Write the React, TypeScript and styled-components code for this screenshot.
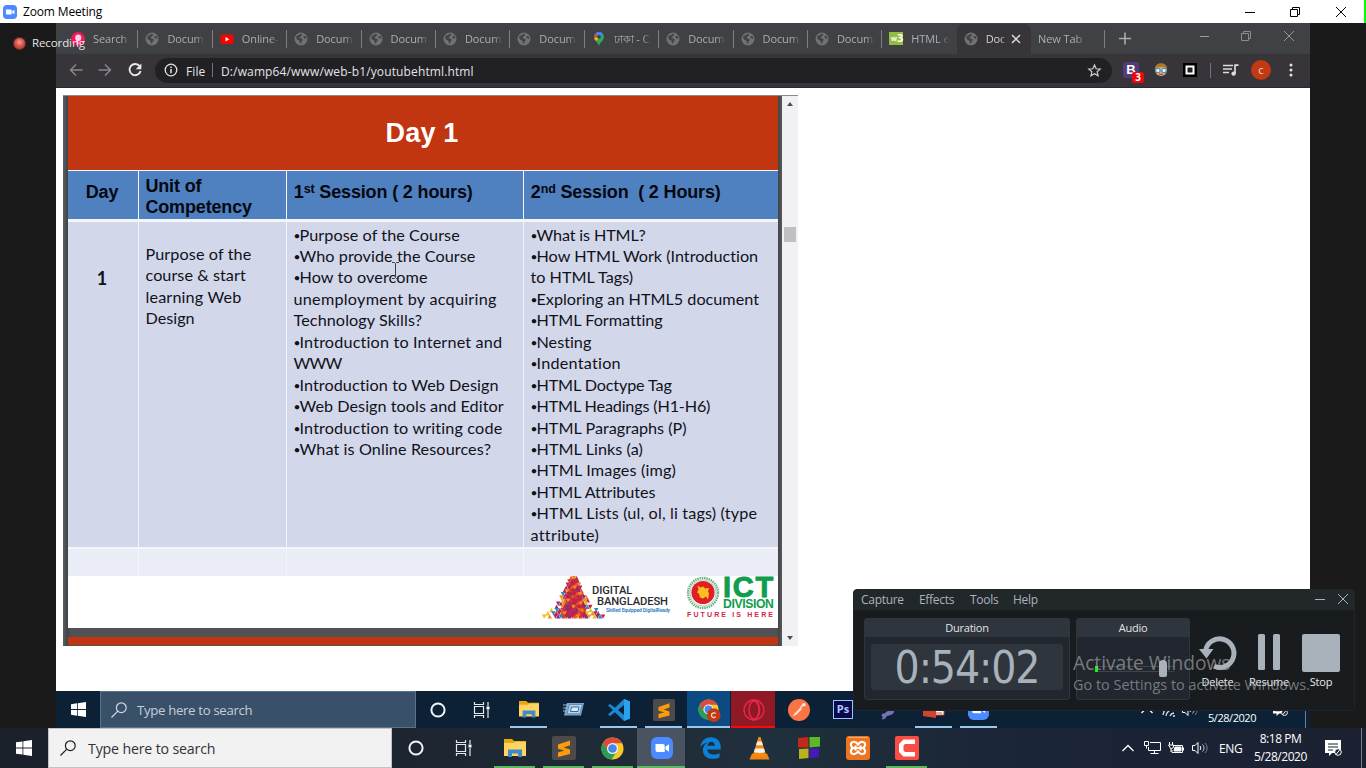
import React from "react";
import styled, { createGlobalStyle, css } from "styled-components";

const Global = createGlobalStyle`
  * { box-sizing: border-box; }
  html, body { margin: 0; padding: 0; background: #1a1a1a; }
  body { width: 1366px; height: 768px; overflow: hidden; font-family: "Open Sans", "Noto Sans", sans-serif; }
  svg { display: block; flex: none; overflow: visible; }
`;

/* ---------- desktop shell ---------- */
const Desktop = styled.div`
  position: relative;
  width: 1366px;
  height: 768px;
  display: flex;
  flex-direction: column;
  overflow: hidden;
  background: #1a1a1a;
`;
const TitleBar = styled.header`
  height: 23px;
  flex: none;
  display: flex;
  align-items: center;
  padding-left: 3px;
  background: #fff;
  border-right: 2px solid #00ff00;
`;
const TitleText = styled.span`
  margin-left: 6px;
  flex: 1;
  font-size: 12px;
  line-height: 22px;
  letter-spacing: -0.15px;
  color: #000;
`;
const Caption = styled.div<{ $w: number }>`
  width: ${(p) => p.$w}px;
  flex: none;
  display: flex;
  justify-content: center;
`;
const Stage = styled.main`
  height: 705px;
  flex: none;
  padding: 0 56px;
`;
const SharedScreen = styled.section`
  width: 1254px;
  height: 705px;
  display: flex;
  flex-direction: column;
  background: #fff;
`;
const Recording = styled.div`
  position: absolute;
  left: 13px;
  top: 35px;
  display: flex;
  align-items: center;
  gap: 6px;
  color: #e6e6e6;
  font-size: 11.5px;
  line-height: 16px;
  letter-spacing: -0.1px;
`;
const RecDot = styled.i`
  width: 13px;
  height: 13px;
  border-radius: 50%;
  border: 1px solid #6d2f2b;
  background: radial-gradient(circle at 50% 38%, #f3a59b 0, #dc5a4f 40%, #b93f36 75%);
`;

/* ---------- browser ---------- */
const TabStrip = styled.div`
  height: 31px;
  flex: none;
  display: flex;
  padding-left: 8px;
  background: #3f4145;
`;
const Tab = styled.div<{ $active?: boolean; $noLine?: boolean }>`
  position: relative;
  width: 74.4px;
  height: 31px;
  flex: none;
  display: flex;
  align-items: center;
  padding: 0 0 0 7px;
  color: #acaeb2;
  font-size: 11px;
  ${(p) =>
    !p.$active && !p.$noLine &&
    css`
      &::after {
        content: "";
        position: absolute;
        right: 0;
        top: 7px;
        width: 1px;
        height: 18px;
        background: #7d7f83;
      }
    `}
  ${(p) =>
    p.$active &&
    css`
      margin-top: 1px;
      height: 30px;
      padding-bottom: 1px;
      border-radius: 7px 7px 0 0;
      background: #37343a;
      color: #d2d1d4;
    `}
`;
const TabText = styled.span<{ $w?: number; $ml?: number }>`
  margin-left: ${(p) => p.$ml ?? 8}px;
  margin-right: 6px;
  flex: none;
  width: ${(p) => p.$w ?? 38}px;
  overflow: hidden;
  white-space: nowrap;
  line-height: 16px;
  letter-spacing: -0.1px;
  mask-image: linear-gradient(90deg, #000 75%, transparent 100%);
`;
const StripControls = styled.div`
  flex: 1;
  display: flex;
  justify-content: flex-end;
  align-items: center;
  padding: 0 0 5px 0;
`;
const Toolbar = styled.div`
  height: 34px;
  flex: none;
  display: flex;
  align-items: center;
  padding: 0 0 1px 12px;
  background: #37343a;
  border-bottom: 1px solid #2b292e;
`;
const NavIcons = styled.div`
  width: 87px;
  flex: none;
  display: flex;
  gap: 13px;
`;
const Omnibox = styled.div`
  width: 957px;
  flex: none;
  height: 25px;
  display: flex;
  align-items: center;
  padding: 0 11px 0 9px;
  border-radius: 13px;
  background: #212024;
  color: #e4e3e6;
  font-size: 12px;
  line-height: 23px;
`;
const FileLabel = styled.span`
  width: 26px;
  margin-left: 8px;
  padding-top: 2px;
  letter-spacing: 0.1px;
`;
const Url = styled.span`
  flex: 1;
  margin-left: 8px;
  padding-top: 2px;
  letter-spacing: 0.13px;
`;
const VLine = styled.i<{ $h: number; $c?: string }>`
  width: 1px;
  flex: none;
  height: ${(p) => p.$h}px;
  background: ${(p) => p.$c ?? "#76747a"};
`;
const Extensions = styled.div`
  flex: 1;
  display: flex;
  align-items: center;
  padding-left: 11px;
`;
const ExtB = styled.div`
  position: relative;
  width: 16px;
  height: 16px;
  border-radius: 3px;
  background: #523c78;
  color: #fff;
  font: bold 13px/16px "Liberation Sans", sans-serif;
  text-align: center;
`;
const ExtBadge = styled.span`
  position: absolute;
  left: 9px;
  top: 10px;
  width: 12px;
  height: 11px;
  border-radius: 2px;
  background: #f00606;
  font: bold 10px/11px "Open Sans", sans-serif;
`;
const Avatar = styled.span`
  width: 20px;
  height: 20px;
  margin-left: 12px;
  border-radius: 50%;
  background: #c13a12;
  color: #f0d8d0;
  font-size: 11px;
  line-height: 19px;
  text-align: center;
`;
const Page = styled.div`
  height: 603px;
  flex: none;
  padding: 7px 0 0 7px;
  background: #fff;
`;

/* ---------- slide deck ---------- */
const Viewer = styled.div`
  width: 735px;
  height: 551px;
  display: flex;
  border-top: 1px solid #8a8a8c;
  background: #fff;
`;
const SlideArea = styled.div`
  width: 719px;
  padding: 0 4px 0 5px;
  background: linear-gradient(90deg, #596066 0, #424649 4px, #505254 8px, #505254 714px, #424446 715px, #55585c 719px);
`;
const Slide = styled.article`
  width: 710px;
  height: 532px;
  display: flex;
  flex-direction: column;
  background: #fff;
`;
const NextSlide = styled.div`
  width: 710px;
  height: 8px;
  margin-top: 9px;
  background: #c13510;
`;
const Banner = styled.h1`
  margin: 0;
  height: 74px;
  padding-right: 2px;
  background: #c13510;
  color: #fff;
  font: bold 27px/74px "Liberation Sans", Arial, sans-serif;
  letter-spacing: 0.2px;
  text-align: center;
`;
const Table = styled.div`
  display: grid;
  grid-template-columns: 70px 147px 236px 254px;
  grid-template-rows: 48px 330px 27px;
  column-gap: 1px;
  padding-top: 1px;
  background: #f4f5fb;
`;
const HeadCell = styled.div<{ $center?: boolean }>`
  display: flex;
  flex-direction: column;
  justify-content: center;
  align-items: ${(p) => (p.$center ? "center" : "flex-start")};
  padding: ${(p) => (p.$center ? "0 2px 5px 0" : "3px 0 0 6.4px")};
  background: #4f80bf;
  color: #06080f;
  white-space: pre;
  font: bold 18px/21px "Liberation Sans", Arial, sans-serif;
  letter-spacing: -0.15px;
`;
const SessionHead = styled.div`
  padding: 0 0 8px 0.4px;
  sup {
    font-size: 12.5px;
    line-height: 0;
    vertical-align: 5px;
  }
`;
const BodyCell = styled.div<{ $top?: number; $center?: boolean }>`
  margin: 3px 0 2px;
  padding: ${(p) => p.$top ?? 1.6}px 0 0 ${(p) => (p.$center ? 0 : 6.5)}px;
  background: #d3d7ea;
  color: #10121a;
  font: 16.2px/21.43px Lato, sans-serif;
  font-variant-ligatures: none;
  white-space: pre;
  ${(p) => p.$center && css`padding-right: 2px; text-align: center; font-weight: bold; font-size: 18px;`}
`;
const FootCell = styled.div`
  background: #eaecf6;
`;
const Line = styled.div<{ $ls?: number }>`
  letter-spacing: ${(p) => p.$ls ?? 0}px;
`;
const Bullet = styled.span`
  display: inline-block;
  width: 6px;
  font-size: 12px;
  letter-spacing: 0;
  line-height: 0;
  vertical-align: 1px;
`;
const Logos = styled.footer`
  height: 52px;
  display: flex;
  padding-left: 474px;
`;
const DigitalLogo = styled.div`
  width: 144px;
  display: flex;
`;
const DigitalText = styled.div`
  margin-left: -18px;
  padding-top: 9px;
  color: #2b2b2e;
  font: 500 11.2px/11px Roboto, sans-serif;
  letter-spacing: -0.1px;
  white-space: nowrap;
`;
const DigitalSecond = styled.div`
  padding-left: 5px;
`;
const DigitalTag = styled.div`
  padding-left: 14px;
  color: #3a86c4;
  font: bold 5px/6px Roboto, sans-serif;
`;
const IctLogo = styled.div`
  width: 90px;
  display: flex;
  flex-direction: column;
`;
const IctTop = styled.div`
  height: 34px;
  display: flex;
  gap: 3px;
`;
const IctWords = styled.div`
  width: 54px;
  color: #0f9d4e;
  font: bold 12.2px/11px "Liberation Sans", Arial, sans-serif;
  letter-spacing: -0.38px;
`;
const IctBig = styled.div`
  height: 23px;
  font: bold 29px/23px "Liberation Sans", Arial, sans-serif;
  letter-spacing: 1.7px;
  -webkit-text-stroke: 0.9px #0f9d4e;
`;
const Future = styled.div`
  color: #cf2747;
  font: bold 7px/9px "Liberation Sans", Arial, sans-serif;
  letter-spacing: 2.13px;
  padding: 0 0 0 1px;
  white-space: nowrap;
`;
const ScrollTrack = styled.div`
  width: 16px;
  display: flex;
  flex-direction: column;
  align-items: center;
  justify-content: space-between;
  padding: 6px 0 6px;
  background: #f1f0f3;
`;
const Thumb = styled.div`
  width: 12px;
  height: 15px;
  margin: 0 0 273px;
  background: #c0bfc1;
`;

/* ---------- task bars ---------- */
const InnerBar = styled.div`
  height: 37px;
  flex: none;
  display: flex;
  align-items: stretch;
  background: #0c2135;
`;
const HostBar = styled.div`
  height: 40px;
  flex: none;
  display: flex;
  align-items: stretch;
  background: linear-gradient(90deg, #1b212b 0, #1d2530 30%, #20303c 56%, #1a2537 75%, #1b2131 100%);
`;
const Cell = styled.div<{ $w: number }>`
  width: ${(p) => p.$w}px;
  flex: none;
  display: flex;
  align-items: center;
  justify-content: center;
`;
const Search = styled.div<{ $host?: boolean }>`
  width: ${(p) => (p.$host ? 344 : 316)}px;
  flex: none;
  display: flex;
  align-items: center;
  gap: ${(p) => (p.$host ? 12 : 10)}px;
  padding-left: ${(p) => (p.$host ? 11 : 10)}px;
  border: 1px solid ${(p) => (p.$host ? "#c2c2c2" : "#55748c")};
  background: ${(p) => (p.$host ? "#f2f2f2" : "#385068")};
  color: ${(p) => (p.$host ? "#303438" : "#c3ced8")};
  font-size: ${(p) => (p.$host ? 14.2 : 13.2)}px;
  letter-spacing: ${(p) => (p.$host ? -0.17 : -0.32)}px;
`;
const AppSlot = styled.div<{ $w: number; $bar?: string; $inset?: number; $bg?: string }>`
  width: ${(p) => p.$w}px;
  flex: none;
  display: flex;
  align-items: center;
  justify-content: center;
  ${(p) =>
    p.$bar &&
    css`
      background-image: linear-gradient(90deg, transparent ${p.$inset ?? 4}px, ${p.$bar} ${p.$inset ?? 4}px, ${p.$bar} calc(100% - ${p.$inset ?? 4}px), transparent 0),
        linear-gradient(90deg, transparent ${p.$inset ?? 0}px, ${p.$bg ?? "transparent"} ${p.$inset ?? 0}px, ${p.$bg ?? "transparent"} calc(100% - ${p.$inset ?? 0}px), transparent 0);
      background-size: 100% 2px, 100% 100%;
      background-position: bottom, center;
      background-repeat: no-repeat;
    `}
`;
const Tray = styled.div<{ $pr: number }>`
  flex: 1;
  display: flex;
  align-items: center;
  justify-content: flex-end;
  padding-right: ${(p) => p.$pr}px;
  color: #fff;
`;
const Clock = styled.div<{ $w: number; $lh: number; $size: number }>`
  width: ${(p) => p.$w}px;
  text-align: center;
  font-size: ${(p) => p.$size}px;
  line-height: ${(p) => p.$lh}px;
  letter-spacing: -0.45px;
`;
const Lang = styled.span`
  width: 26px;
  margin-left: 7px;
  font-size: 12px;
  letter-spacing: -0.4px;
`;

/* ---------- recorder window ---------- */
const Recorder = styled.section`
  position: absolute;
  left: 853px;
  top: 589px;
  width: 502px;
  height: 122px;
  border-radius: 4px;
  border: 1px solid #1f262b;
  background: #181c1f;
  color: #aab3bb;
  overflow: hidden;
`;
const RecMenu = styled.nav`
  height: 20px;
  display: flex;
  align-items: center;
  padding: 0 0 2px 7px;
  background: #22272a;
  font-size: 12px;
  letter-spacing: -0.3px;
`;
const MenuItem = styled.span<{ $w: number }>`
  width: ${(p) => p.$w}px;
`;
const RecMenuEnd = styled.div`
  flex: 1;
  display: flex;
  justify-content: flex-end;
  align-items: center;
  gap: 13px;
  padding-right: 6px;
`;
const RecBody = styled.div`
  display: flex;
  padding: 8px 0 0 10px;
`;
const Panel = styled.div<{ $w: number }>`
  width: ${(p) => p.$w}px;
  height: 82px;
  margin-right: 6px;
  border: 1px solid #2f353d;
  border-radius: 3px;
  background: #22262e;
`;
const PanelHead = styled.div`
  height: 18px;
  background: #2f353d;
  color: #e1e4e7;
  font-size: 11px;
  line-height: 18px;
  letter-spacing: -0.25px;
  text-align: center;
`;
const Timer = styled.div`
  width: 192px;
  height: 46px;
  margin: 7px auto 0 6px;
  border-radius: 3px;
  background: #2f353d;
  color: #a9b2ba;
  font-family: "DejaVu Sans Condensed", "DejaVu Sans", sans-serif;
  font-stretch: condensed;
  font-size: 44px;
  line-height: 48px;
  letter-spacing: -1.1px;
  text-align: center;
`;
const Meter = styled.div`
  height: 17px;
  margin: 23px 15px 0 18px;
  display: flex;
  align-items: center;
`;
const MeterLevel = styled.i`
  width: 3px;
  height: 6px;
  background: #0cf80c;
`;
const MeterTrack = styled.i<{ $w: number }>`
  width: ${(p) => p.$w}px;
  height: 6px;
  border: solid #3b484b;
  border-width: 1px 0 1px 0;
`;
const Knob = styled.i`
  width: 8px;
  height: 17px;
  border-radius: 4px 4px 2px 2px;
  background: #a9b2ba;
`;
const RecButton = styled.div<{ $w: number }>`
  width: ${(p) => p.$w}px;
  height: 82px;
  flex: none;
  display: flex;
  flex-direction: column;
  justify-content: space-between;
  align-items: center;
  padding: 16px 0 9px;
  color: #e8ebee;
  font-size: 11px;
  line-height: 18px;
  letter-spacing: -0.2px;
`;
const Watermark = styled.div`
  position: absolute;
  left: 1073px;
  top: 650px;
  color: rgba(176, 178, 180, 0.62);
  white-space: nowrap;
`;
const WaterBig = styled.div`
  font-size: 19.2px;
  line-height: 25px;
  margin-bottom: -1px;
`;
const WaterSmall = styled.div`
  font-size: 14.4px;
  line-height: 21px;
  letter-spacing: 0.03px;
`;
const Cursor = styled.div`
  position: absolute;
  left: 391px;
  top: 262px;
`;

/* ---------- icons ---------- */
const ZoomIcon = ({ s }: { s: number }) => (
  <svg width={s} height={s} viewBox="0 0 22 22">
    <rect width="22" height="22" rx="6" fill="#4a8cff" />
    <path d="M4.500 7h7.200a2 2 0 0 1 2 2v6H6.500a2 2 0 0 1-2-2zM14.400 9.800 18 7.300v7.400l-3.600-2.400z" fill="#fff" />
  </svg>
);
const Minus = ({ c = "#000", w = 10 }: { c?: string; w?: number }) => (
  <svg width={w} height="10" viewBox={`0 0 ${w} 10`}><path d={`M0 5.500h${w}`} stroke={c} /></svg>
);
const Restore = ({ c = "#000" }: { c?: string }) => (
  <svg width="10" height="10" viewBox="0 0 10 10" fill="none" stroke={c}><path d="M.5 2.500h7v7h-7zM2.500 2.500v-2h7v7h-2" /></svg>
);
const Cross = ({ c = "#000", s = 10, w = 1 }: { c?: string; s?: number; w?: number }) => (
  <svg width={s} height={s} viewBox="0 0 10 10"><path d="M0 0l10 10M10 0L0 10" stroke={c} strokeWidth={w} /></svg>
);
const Globe = () => (
  <svg width="14" height="14" viewBox="0 0 14 14">
    <circle cx="7" cy="7" r="6.500" fill="#707276" />
    <path d="M2.200 4.600C3.500 3 4.800 3.600 6 2.200c.8-.6 2-.3 2.300.3.200.8-1.300 1-1.500 1.900-.2.800-1.600.7-1.300 1.600.4.800 2.400.1 3 1.200.4.900-.3 1.600-.8 2.200-.5.700-.3 1.900-1.200 2.200-.9-.2-.7-1.700-.9-2.400C5.300 8.200 4 8.300 3.200 7.500 2.500 6.700 1.900 5.600 2.200 4.600zM9.600 4.300c.7-.5 1.500-.4 2.100 0 .4.900.6 1.700.5 2.600-.8.100-1.500-.2-2-.8-.5-.5-1.200-1.200-.6-1.800z" fill="#414347" />
  </svg>
);
const PinkIcon = () => (
  <svg width="14" height="14" viewBox="0 0 14 14">
    <circle cx="7" cy="7" r="7" fill="#f5155c" />
    <path d="M7 2.500c3.500 0 4 3.500 2.800 5.500-.9 1.400-2.300 1-2.500.4v4H5.600V9C3.500 7.500 3.500 2.500 7 2.500z" fill="#fbd3df" />
  </svg>
);
const YouTube = () => (
  <svg width="14" height="14" viewBox="0 0 14 14"><rect x=".5" y="2.500" width="13" height="9.500" rx="2.200" fill="#f00" /><path d="M5.500 5v4.500L9.300 7.250z" fill="#fff" /></svg>
);
const MapPin = () => (
  <svg width="14" height="14" viewBox="0 0 14 14">
    <path d="M7 0a4.900 4.900 0 0 1 4.900 4.900C11.900 8.600 8.200 9.500 7 14 5.800 9.500 2.100 8.600 2.100 4.900A4.900 4.900 0 0 1 7 0z" fill="#34a853" />
    <path d="M3.200 1.800A4.900 4.900 0 0 1 11 2.100L7 6.800z" fill="#4285f4" /><path d="M3.200 1.800A4.900 4.900 0 0 0 2.200 5.900L7 4.900z" fill="#ea4335" />
    <path d="M2.200 5.900c.3 1.300 1 2.100 1.800 3L8 5z" fill="#fbbc04" /><circle cx="7" cy="4.900" r="1.800" fill="#3f4145" />
  </svg>
);
const W3Icon = styled.span`
  width: 14px;
  height: 13px;
  background: #93bd3c;
  color: #fff;
  font: bold 11px/12px "Open Sans", sans-serif;
  text-align: right;
  small { font-size: 7px; vertical-align: 1px; letter-spacing: 0; }
`;
const Back = ({ flip }: { flip?: boolean }) => (
  <svg width="16" height="16" viewBox="0 0 16 16" transform={flip ? "scale(-1 1)" : undefined}><path d="M14.500 8H2.500M8 2.500L2.500 8 8 13.500" fill="none" stroke="#88868b" strokeWidth="1.500" /></svg>
);
const Reload = () => (
  <svg width="16" height="16" viewBox="-1 0 16 16"><path d="M12.700 4.300A5.600 5.600 0 1 0 13.600 9" fill="none" stroke="#e8e8ea" strokeWidth="1.900" /><path d="M14.400 1.500v5.700H8.700z" fill="#e8e8ea" /></svg>
);
const Info = () => (
  <svg width="14" height="14" viewBox="0 0 14 14"><circle cx="7" cy="7" r="5.800" fill="none" stroke="#e4e3e6" strokeWidth="1.300" /><path d="M7 6v4.300M7 3.500v1.500" stroke="#e4e3e6" strokeWidth="1.500" /></svg>
);
const Star = () => (
  <svg width="13" height="13" viewBox="0 0 12 12"><path d="M6 .9l1.500 3.500 3.800.3-2.900 2.500.9 3.700L6 8.900l-3.300 2 .9-3.700L.7 4.700l3.800-.3z" fill="none" stroke="#d0cfd3" strokeWidth="1.100" /></svg>
);
const Face = () => (
  <svg width="14" height="14" viewBox="0 0 14 14">
    <circle cx="7" cy="7" r="6" fill="#e0ab72" /><path d="M.8 7C.5 2 4 .3 7 .3S13.500 2 13.200 7L11 4.500 8 4 3 4.600z" fill="#a87a2e" />
    <circle cx="3.900" cy="7.500" r="2.300" fill="#d9efff" stroke="#2378b8" strokeWidth=".9" /><circle cx="10.100" cy="7.500" r="2.300" fill="#d9efff" stroke="#2378b8" strokeWidth=".9" /><path d="M5 11.300h4" stroke="#8d4b2a" />
  </svg>
);
const Queue = () => (
  <svg width="16" height="12" viewBox="0 0 16 12"><path d="M0 1.500h10M0 5h9M0 8.500h6" stroke="#dcdbde" strokeWidth="1.500" /><path d="M12 9.500V1.200h3.500" stroke="#dcdbde" strokeWidth="1.700" fill="none" /><circle cx="10.600" cy="9.600" r="2.200" fill="#dcdbde" /></svg>
);
const Dots = () => (
  <svg width="4" height="14" viewBox="0 0 4 14" fill="#e2e1e4"><circle cx="2" cy="2" r="1.500" /><circle cx="2" cy="7" r="1.500" /><circle cx="2" cy="12" r="1.500" /></svg>
);
const Windows = ({ s }: { s: number }) => (
  <svg width={s} height={s} viewBox="0 0 16 16" fill="#fff"><path d="M0 2.300l6.500-.9v6.100H0zM7.300 1.300L16 0v7.500H7.300zM0 8.400h6.500v6.200L0 13.700zM7.300 8.400H16V16l-8.700-1.300z" /></svg>
);
const Magnifier = ({ c, s }: { c: string; s: number }) => (
  <svg width={s} height={s} viewBox="0 0 16 16" fill="none" stroke={c} strokeWidth="1.200"><circle cx="10.300" cy="5.700" r="4.900" /><path d="M6.800 9.200L.5 15.500" /></svg>
);
const Ring = () => (
  <svg width="16" height="16" viewBox="0 0 16 16"><circle cx="8" cy="8" r="6.600" fill="none" stroke="#f2f4f5" strokeWidth="2" /></svg>
);
const TaskView = () => (
  <svg width="17" height="16" viewBox="0 0 17 16" fill="none" stroke="#e6e9ec" strokeWidth="1.200"><path d="M1.500 4.500h9v7h-9zM1.500 0v2.500h9V0M1.500 16v-2.500h9V16M15 0v4M15 8v8" /><path d="M13.500 4.500h3v3h-3z" fill="#fff" stroke="none" /></svg>
);
const Folder = ({ s = 20 }: { s?: number }) => (
  <svg width={s} height={s * 0.82} viewBox="0 0 22 18">
    <path d="M0 0h8l2 2h12v14H0z" fill="#e8a70f" /><path d="M0 4h10l1.500-1.200H22V17H0z" fill="#ffd460" /><path d="M4 18v-7.500h14V18h-4v-3.500H8V18z" fill="#3f8ac9" />
  </svg>
);
const Sublime = ({ s }: { s: number }) => (
  <svg width={s} height={s} viewBox="0 0 24 24"><rect width="24" height="24" rx="2" fill="#4c4a4a" /><path d="M6 8.600L18 4.500v4.700l-6.500 2.300 6.500 2V18L6 21v-4.600l6.400-2L6 12.700z" fill="#ff9a0c" /></svg>
);
const Chrome = ({ s, badge }: { s: number; badge?: boolean }) => (
  <svg width={s} height={s} viewBox="0 0 24 24">
    <circle cx="12" cy="12" r="11.500" fill="#f6c927" />
    <path d="M12 .5A11.500 11.500 0 0 0 2 6.300l4.700 8.600L12 6.500h10A11.500 11.500 0 0 0 12 .5z" fill="#dc4a3d" />
    <path d="M2 6.300A11.500 11.500 0 0 0 11 23.500l5.200-8.200L7.500 15z" fill="#2a9d55" />
    <circle cx="12" cy="12" r="5.800" fill="#f2f2f2" /><circle cx="12" cy="12" r="4.500" fill="#4687ee" />
    {badge && (<><circle cx="18" cy="18.500" r="7.800" fill="#c13a12" /><path d="M20.200 16.800a2.700 2.700 0 1 0 0 3.400" fill="none" stroke="#f3d9d0" strokeWidth="1.500" /></>)}
  </svg>
);
const RunIcon = () => (
  <svg width="21" height="15" viewBox="0 0 21 15"><path d="M4 1h17l-3 12.500H1z" fill="#79a9d2" /><path d="M6.500 2.500h12.700l-2.200 9.300H4.200z" fill="#b4d3ec" stroke="#416f9c" strokeWidth=".6" /><path d="M8.500 5h7.500l-1 4.500H7.500z" fill="#dcebf7" stroke="#3d6690" /><path d="M0 3h5M0 6h4M0 9h3" stroke="#9cc1df" /></svg>
);
const VsCode = () => (
  <svg width="22" height="22" viewBox="0 0 22 22"><path d="M16 0l6 2.500v17L16 22 7 13.200 2 17 0 15.500 5 11 0 6.500 2 5l5 3.800zM16 6l-6 5 6 5z" fill="#1c87d4" fillRule="evenodd" /><path d="M16 0l6 2.500v17L16 22z" fill="#2aa3ee" /></svg>
);
const Opera = () => (
  <svg width="22" height="22" viewBox="0 0 22 22" fill="none" stroke="#f0264e"><circle cx="11" cy="11" r="10" strokeWidth="1.300" /><ellipse cx="11" cy="11" rx="5" ry="9" strokeWidth="1.300" /><path d="M13 2.500c5 2 5 15 0 17" strokeWidth="1" /></svg>
);
const Postman = () => (
  <svg width="22" height="22" viewBox="0 0 22 22"><circle cx="11" cy="11" r="11" fill="#fb7443" /><path d="M4.500 17.500l2-3 6-6 1.500 1.500-6 6z" fill="#fbe3d8" /><path d="M12 9l3-3" stroke="#fbe3d8" strokeWidth="1.500" /><circle cx="16" cy="5.800" r="1.800" fill="#fbe3d8" /></svg>
);
const PsIcon = styled.span`
  width: 20px;
  height: 19px;
  margin: 0 1px 1px 0;
  border: 1px solid #9cc4f5;
  background: #0a0950;
  color: #a8cdfb;
  font: bold 11px/16px "Open Sans", sans-serif;
  text-align: center;
`;
const Feather = () => (
  <svg width="20" height="22" viewBox="0 1 20 22"><path d="M3 16c2-1 3 0 4-2l2-1 8-8-2 9c-1 3-4 3-7 4-1 1-1 3-5 3.500-.5-.5-.5-1 1-2-1-1-2-2-1-3.500z" fill="#7472b2" /></svg>
);
const PowerPoint = () => (
  <svg width="22" height="22" viewBox="0 0 22 22"><path d="M10 3h11v13H10z" fill="#fff" stroke="#c9472b" /><path d="M12 11h7M12 14h7" stroke="#d35230" /><path d="M0 2l13-2v19L0 17z" fill="#d1452a" /></svg>
);
const Edge = () => (
  <svg width="21" height="22" viewBox="0 0 21 22"><path d="M.3 10C1.500 3 6 .2 11 .2c6 0 9.700 4.300 9.700 9.700v2.700H7.300c.2 3.600 3.200 5 6.300 5 2.300 0 4.200-.6 5.900-1.600v4.300c-2 1-4.100 1.500-6.800 1.500-6 0-9.800-3.600-9.800-8.600 0-3.500 1.900-6.200 5-7.600C4.800 6 2 7.500.3 10zM7.400 8.800h7.400c0-2.600-1.400-4.100-3.500-4.100-2.200 0-3.600 1.700-3.900 4.100z" fill="#0a80d8" /></svg>
);
const Vlc = () => (
  <svg width="21" height="23" viewBox="0 0 21 23"><path d="M3 16.500h15l2.500 6H.5z" fill="#f0860f" /><path d="M9.500 0h2l5.500 18c-1.500 2-11.500 2-13 0z" fill="#f58a12" /><path d="M8.200 4.500h4.600l1.100 3.800H7zM6 11.500h9l1.100 3.500c-2 1.200-9.200 1.200-11.200 0z" fill="#f2f0ee" /></svg>
);
const Squares = () => (
  <svg width="22" height="22" viewBox="0 0 22 22"><path d="M0 1l10.500-1v10.500H0z" fill="#c4271d" /><path d="M11.500 0H22v9.500l-10.500 1z" fill="#5db829" /><path d="M1 12l9.500-.5V21L1 22z" fill="#b9b21b" /><path d="M11.500 11.500L21 11v9l-9.500 1z" fill="#4719b5" /></svg>
);
const Xampp = () => (
  <svg width="24" height="24" viewBox="0 0 24 24"><rect width="24" height="24" rx="3" fill="#ef7420" /><path d="M2 1.500h20" stroke="#f8b07d" strokeWidth="1" /><path d="M12 8.500C9.500 4.500 4 5.500 5 9.500c.5 1.700 2 2.500 2 2.500s-1.500.8-2 2.500c-1 4 4.500 5 7 1 2.500 4 8 3 7-1-.5-1.700-2-2.500-2-2.500s1.500-.8 2-2.500c1-4-4.500-5-7-1zM9.500 9.500v5M9.500 12h5M14.500 9.500v5" fill="none" stroke="#fff" strokeWidth="2.200" /></svg>
);
const Camtasia = () => (
  <svg width="24" height="24" viewBox="0 0 24 24"><rect width="24" height="24" rx="2" fill="#fb4d43" /><path d="M8.500 3.500H20V8H10l-1.500 1.500v5L10 16h10v4.500H8.500L4 16V8z" fill="#fff" /></svg>
);
const Chevron = () => (
  <svg width="12" height="8" viewBox="0 0 12 8"><path d="M.5 7L6 1.500 11.500 7" fill="none" stroke="#fff" strokeWidth="1.300" /></svg>
);
const Network = () => (
  <svg width="17" height="14" viewBox="0 0 17 14" fill="none" stroke="#fff"><path d="M6 1.500h10.500v8H4.500V6M10.500 9.500v3M6.500 12.500h8M.5.500h4v4h-4zM2.500 4.500v3" /></svg>
);
const Battery = () => (
  <svg width="16" height="13" viewBox="0 0 16 13" fill="none" stroke="#fff"><path d="M6 3.500h8.500v7H4V8M15.500 5.500v3" /><path d="M7 5h6v4H6z" fill="#fff" /><path d="M1.500 0v3M4.500 0v3M.5 3h5v2.500L3 7zM3 7v3" /></svg>
);
const Volume = () => (
  <svg width="16" height="14" viewBox="0 0 16 14" fill="none" stroke="#fff"><path d="M.5 4.500h2.500L6 1.500v11L3 9.500H.5z" /><path d="M8 5c1 1.300 1 2.700 0 4" /><path d="M10.500 3.500c2 2.200 2 4.800 0 7" stroke="#c8ccd0" /><path d="M13 2c2.800 3 2.800 7 0 10" stroke="#7c828a" /></svg>
);
const Wifi = () => (
  <svg width="14" height="14" viewBox="0 0 14 14" fill="none" stroke="#dfe5ea" strokeWidth="1.300"><path d="M1 12A11 11 0 0 1 12 2M4 13a8 8 0 0 1 8-7M8 13a5 5 0 0 1 4-3M11 13h2" /></svg>
);
const Notice = ({ s = 17 }: { s?: number }) => (
  <svg width={s} height={s} viewBox="0 0 17 17"><path d="M0 0h16v13H7l-3 3v-3H0z" fill="#fff" /><path d="M3 4h10M3 7h10M3 10h5" stroke="#1b2433" strokeWidth="1.200" /><circle cx="13" cy="12" r="3.300" fill="#1b2433" stroke="#fff" /><path d="M11 14.500l4-5" stroke="#fff" /></svg>
);
const Undo = () => (
  <svg width="38" height="36" viewBox="0 -1 38 36"><path d="M6.500 16A14.300 14.300 0 1 1 15 31.300" fill="none" stroke="#a9b2ba" strokeWidth="5" /><path d="M0 14h14.500L7.500 23.500z" fill="#a9b2ba" /></svg>
);

const pyramidColors = ["#c8203a", "#e8572a", "#b3286a", "#f08c1f", "#8a2a72", "#d63a31", "#1f8fb8", "#f2b91e"];
const pyramid: { x: number; y: number; c: string }[] = [];
for (let r = 0; r < 13; r++) {
  const half = r < 10 ? 3 + r * 1.6 : 19 + (r - 9) * 3.6;
  for (let x = -half; x <= half; x += 2.8) {
    const k = (r * 7 + Math.round(x + 50) * 5) % 13;
    const edge = Math.abs(x) > 9 + r * 0.3;
    if (edge && k % 4 === 0) continue;
    pyramid.push({ x: 32 + x, y: r * 3.2, c: pyramidColors[edge ? (k + 5) % 8 : k % 6] });
  }
}
const Pyramid = () => (
  <svg width="68" height="44" viewBox="0 0 68 44">
    <path d="M32 0l4 6 10 35H18l10-35z" fill="#c93a45" />
    {pyramid.map((p, i) => (
      <path key={i} d={i % 2 ? `M${p.x - 2.2} ${p.y}h4.4l-2.200 4.400z` : `M${p.x - 2.2} ${p.y + 4.2}l2.200-4.400 2.200 4.400z`} fill={p.c} />
    ))}
  </svg>
);
const Seal = () => (
  <svg width="34" height="34" viewBox="0 0 34 34">
    <circle cx="17" cy="17" r="15" fill="#f3f8f3" stroke="#6ab185" strokeWidth="2.400" strokeDasharray="1.500 .8" />
    <circle cx="17" cy="17" r="13" fill="#fff" stroke="#7ab98e" strokeWidth=".6" />
    <circle cx="17" cy="16.500" r="11.600" fill="#e01e26" />
    <path d="M11.500 9.500l3 2 3-1 1.500 2 4-.5-1 3.500 1 2-1 6-2-3-3 2-3-1-1-4-2-1 1.500-3z" fill="#f8c01c" />
  </svg>
);

/* ---------- content ---------- */
const docTab = (label = "Docum") => ({ icon: <Globe />, label });
const tabs = [
  { icon: <PinkIcon />, label: "Search" },
  docTab(),
  { icon: <YouTube />, label: "Online-" },
  docTab(), docTab(), docTab(), docTab(),
  { icon: <MapPin />, label: "ঢাকা - C" },
  docTab("Docume"), docTab("Docume"), docTab("Docume"),
  { icon: <W3Icon><small>w</small>3</W3Icon>, label: "HTML el" },
];

type Row = { t: string; b?: boolean; ls?: number };
const first: Row[] = [
  { t: "Purpose of the Course", b: true, ls: 0.07 }, { t: "Who provide the Course", b: true, ls: 0.07 }, { t: "How to overcome", b: true, ls: 0.1 },
  { t: "unemployment by acquiring", ls: 0.26 }, { t: "Technology Skills?", ls: 0.09 }, { t: "Introduction to Internet and", b: true, ls: 0.17 },
  { t: "WWW", ls: -0.8 }, { t: "Introduction to Web Design", b: true, ls: 0.07 }, { t: "Web Design tools and Editor", b: true, ls: 0.04 },
  { t: "Introduction to writing code", b: true, ls: 0.15 }, { t: "What is Online Resources?", b: true, ls: 0.1 },
];
const second: Row[] = [
  { t: "What is HTML?", b: true, ls: -0.15 }, { t: "How HTML Work (Introduction", b: true }, { t: "to HTML Tags)", ls: 0 },
  { t: "Exploring an HTML5 document", b: true }, { t: "HTML Formatting", b: true, ls: -0.03 }, { t: "Nesting", b: true }, { t: "Indentation", b: true, ls: 0.25 },
  { t: "HTML Doctype Tag", b: true, ls: -0.15 }, { t: "HTML Headings (H1-H6)", b: true, ls: -0.17 }, { t: "HTML Paragraphs (P)", b: true },
  { t: "HTML Links (a)", b: true, ls: 0.05 }, { t: "HTML Images (img)", b: true, ls: 0.15 }, { t: "HTML Attributes", b: true, ls: -0.05 },
  { t: "HTML Lists (ul, ol, li tags) (type", b: true, ls: 0.15 }, { t: "attribute)", ls: 0.3 },
];
const unit: Row[] = [{ t: "Purpose of the", ls: 0.1 }, { t: "course & start", ls: 0.05 }, { t: "learning Web", ls: 0.15 }, { t: "Design" }];
const Lines = ({ rows }: { rows: Row[] }) => (
  <>
    {rows.map((r) => (
      <Line key={r.t} $ls={r.ls}>{r.b && <Bullet>•</Bullet>}{r.t}</Line>
    ))}
  </>
);
const lightBar = "#9cc7ee";
const greenBar = "#5cb85f";

export default function App() {
  return (
    <>
      <Global />
      <Desktop>
        <TitleBar>
          <ZoomIcon s={14} />
          <TitleText>Zoom Meeting</TitleText>
          <Caption $w={45}><Minus /></Caption>
          <Caption $w={46}><Restore /></Caption>
          <Caption $w={46}><Cross /></Caption>
        </TitleBar>

        <Stage>
          <SharedScreen>
            <TabStrip>
              {tabs.map((t, i) => (
                <Tab key={i} $noLine={i === 11}>{t.icon}<TabText>{t.label}</TabText></Tab>
              ))}
              <Tab $active><Globe /><TabText $w={20}>Docu</TabText><Cross c="#dddce0" s={8} w={1.8} /></Tab>
              <Tab><TabText $w={50} $ml={0}>New Tab</TabText></Tab>
              <Caption $w={40}>
                <svg width="12" height="31" viewBox="0 0 12 31"><path d="M0 15.500h12M6 9.500v12" stroke="#aaacb0" strokeWidth="1.600" /></svg>
              </Caption>
              <StripControls>
                <Caption $w={42}><Minus c="#9a9ca0" w={9} /></Caption>
                <Caption $w={42}><Restore c="#8b8d91" /></Caption>
                <Caption $w={43}><Cross c="#94969a" /></Caption>
              </StripControls>
            </TabStrip>
            <Toolbar>
              <NavIcons><Back /><Back flip /><Reload /></NavIcons>
              <Omnibox>
                <Info /><FileLabel>File</FileLabel><VLine $h={14} /><Url>D:/wamp64/www/web-b1/youtubehtml.html</Url><Star />
              </Omnibox>
              <Extensions>
                <ExtB>B<ExtBadge>3</ExtBadge></ExtB>
                <Caption $w={44}><Face /></Caption>
                <svg width="14" height="14" viewBox="0 0 14 14"><rect width="14" height="14" fill="#000" /><rect x="3.500" y="3.500" width="7" height="7" fill="#222" stroke="#fff" strokeWidth="2" /></svg>
                <Caption $w={26}><VLine $h={15} /></Caption>
                <Queue />
                <Avatar>c</Avatar>
                <Caption $w={39}><Dots /></Caption>
              </Extensions>
            </Toolbar>

            <Page>
              <Viewer>
                <SlideArea>
                  <Slide>
                    <Banner>Day 1</Banner>
                    <Table>
                      <HeadCell $center>Day</HeadCell>
                      <HeadCell><span>Unit of</span><span>Competency</span></HeadCell>
                      <HeadCell><SessionHead>1<sup>st</sup> Session ( 2 hours)</SessionHead></HeadCell>
                      <HeadCell><SessionHead>2<sup>nd</sup> Session  ( 2 Hours)</SessionHead></HeadCell>
                      <BodyCell $center $top={46}>1</BodyCell>
                      <BodyCell $top={21}><Lines rows={unit} /></BodyCell>
                      <BodyCell><Lines rows={first} /></BodyCell>
                      <BodyCell><Lines rows={second} /></BodyCell>
                      <FootCell /><FootCell /><FootCell /><FootCell />
                    </Table>
                    <Logos>
                      <DigitalLogo>
                        <Pyramid />
                        <DigitalText>
                          <div>DIGITAL</div>
                          <DigitalSecond>BANGLADESH</DigitalSecond>
                          <DigitalTag>Skilled Equipped DigitalReady</DigitalTag>
                        </DigitalText>
                      </DigitalLogo>
                      <IctLogo>
                        <IctTop>
                          <Seal />
                          <IctWords><IctBig>ICT</IctBig>DIVISION</IctWords>
                        </IctTop>
                        <Future>FUTURE IS HERE</Future>
                      </IctLogo>
                    </Logos>
                  </Slide>
                  <NextSlide />
                </SlideArea>
                <ScrollTrack>
                  <svg width="6" height="4" viewBox="0 0 6 4"><path d="M0 4l3-4 3 4z" fill="#505050" /></svg>
                  <Thumb />
                  <svg width="6" height="4" viewBox="0 0 6 4"><path d="M0 0h6L3 4z" fill="#505050" /></svg>
                </ScrollTrack>
              </Viewer>
            </Page>

            <InnerBar>
              <Cell $w={44}><Windows s={15} /></Cell>
              <Search><Magnifier c="#cfdae3" s={16} />Type here to search</Search>
              <Cell $w={43}><Ring /></Cell>
              <Cell $w={45}><TaskView /></Cell>
              <Cell $w={2} />
              <AppSlot $w={45} $bar={lightBar}><Folder s={20} /></AppSlot>
              <AppSlot $w={45}><RunIcon /></AppSlot>
              <AppSlot $w={45} $bar={lightBar}><VsCode /></AppSlot>
              <AppSlot $w={45} $bar={lightBar}><Sublime s={22} /></AppSlot>
              <AppSlot $w={45} $bar={lightBar} $bg="#0c4a83" $inset={0.5}><Chrome s={21} badge /></AppSlot>
              <AppSlot $w={45} $bar="#ff0808" $bg="#8f1a26" $inset={0.5}><Opera /></AppSlot>
              <AppSlot $w={45}><Postman /></AppSlot>
              <AppSlot $w={45}><PsIcon>Ps</PsIcon></AppSlot>
              <AppSlot $w={45}><Feather /></AppSlot>
              <AppSlot $w={45} $bar={lightBar}><PowerPoint /></AppSlot>
              <AppSlot $w={45} $bar={lightBar}><ZoomIcon s={21} /></AppSlot>
              <Tray $pr={4}>
                <Caption $w={24}><Chevron /></Caption>
                <Caption $w={20}><Wifi /></Caption>
                <Caption $w={22}><Volume /></Caption>
                <Clock $w={62} $lh={16} $size={11}>8:18 PM<br />5/28/2020</Clock>
                <Caption $w={34}><Notice s={15} /></Caption>
                <Cell $w={8} />
                <VLine $h={37} $c="#6c7f90" />
              </Tray>
            </InnerBar>
          </SharedScreen>
        </Stage>

        <HostBar>
          <Cell $w={48}><Windows s={16} /></Cell>
          <Search $host><Magnifier c="#1c1f22" s={16} />Type here to search</Search>
          <Cell $w={48}><Ring /></Cell>
          <Cell $w={47}><TaskView /></Cell>
          <Cell $w={3} />
          <AppSlot $w={49} $bar={greenBar}><Folder s={22} /></AppSlot>
          <AppSlot $w={49} $bar={greenBar}><Sublime s={24} /></AppSlot>
          <AppSlot $w={49} $bar={greenBar}><Chrome s={23} /></AppSlot>
          <AppSlot $w={49} $bar={greenBar} $bg="#4a5460" $inset={0.5}><ZoomIcon s={22} /></AppSlot>
          <AppSlot $w={49}><Edge /></AppSlot>
          <AppSlot $w={49}><Vlc /></AppSlot>
          <AppSlot $w={49}><Squares /></AppSlot>
          <AppSlot $w={49}><Xampp /></AppSlot>
          <AppSlot $w={49} $bar={greenBar}><Camtasia /></AppSlot>
          <Tray $pr={4}>
            <Caption $w={24}><Chevron /></Caption>
            <Caption $w={24}><Network /></Caption>
            <Caption $w={24}><Battery /></Caption>
            <Caption $w={24}><Volume /></Caption>
            <Lang>ENG</Lang>
            <Clock $w={71} $lh={18} $size={12}>8:18 PM<br />5/28/2020</Clock>
            <Caption $w={35}><Notice /></Caption>
            <Cell $w={10} />
            <VLine $h={40} $c="#7b8087" />
          </Tray>
        </HostBar>

        <Recording><RecDot />Recording</Recording>
        <Cursor>
          <svg width="9" height="17" viewBox="0 0 9 17"><path d="M1 .500h2.500l1 1 1-1H8M4.500 1.500v14M1 16.500h2.500l1-1 1 1H8" fill="none" stroke="#3a3c44" /></svg>
        </Cursor>

        <Recorder>
          <RecMenu>
            <MenuItem $w={58}>Capture</MenuItem>
            <MenuItem $w={51}>Effects</MenuItem>
            <MenuItem $w={43}>Tools</MenuItem>
            <MenuItem $w={30}>Help</MenuItem>
            <RecMenuEnd><Minus c="#a9b2ba" /><Cross c="#a9b2ba" /></RecMenuEnd>
          </RecMenu>
          <RecBody>
            <Panel $w={206}><PanelHead>Duration</PanelHead><Timer>0:54:02</Timer></Panel>
            <Panel $w={114}>
              <PanelHead>Audio</PanelHead>
              <Meter><MeterLevel /><MeterTrack $w={61} /><Knob /><MeterTrack $w={7} /></Meter>
            </Panel>
            <RecButton $w={43}><Undo /><span>Delete</span></RecButton>
            <RecButton $w={60}>
              <svg width="22" height="38" viewBox="0 0 22 38" fill="#a9b2ba"><rect width="7" height="36" rx="1.500" /><rect x="15" width="7" height="36" rx="1.500" /></svg>
              <span>Resume</span>
            </RecButton>
            <RecButton $w={44}>
              <svg width="38" height="38" viewBox="0 0 38 38"><rect width="38" height="38" rx="2" fill="#a9b2ba" /></svg>
              <span>Stop</span>
            </RecButton>
          </RecBody>
        </Recorder>
        <Watermark>
          <WaterBig>Activate Windows</WaterBig>
          <WaterSmall>Go to Settings to activate Windows.</WaterSmall>
        </Watermark>
      </Desktop>
    </>
  );
}
